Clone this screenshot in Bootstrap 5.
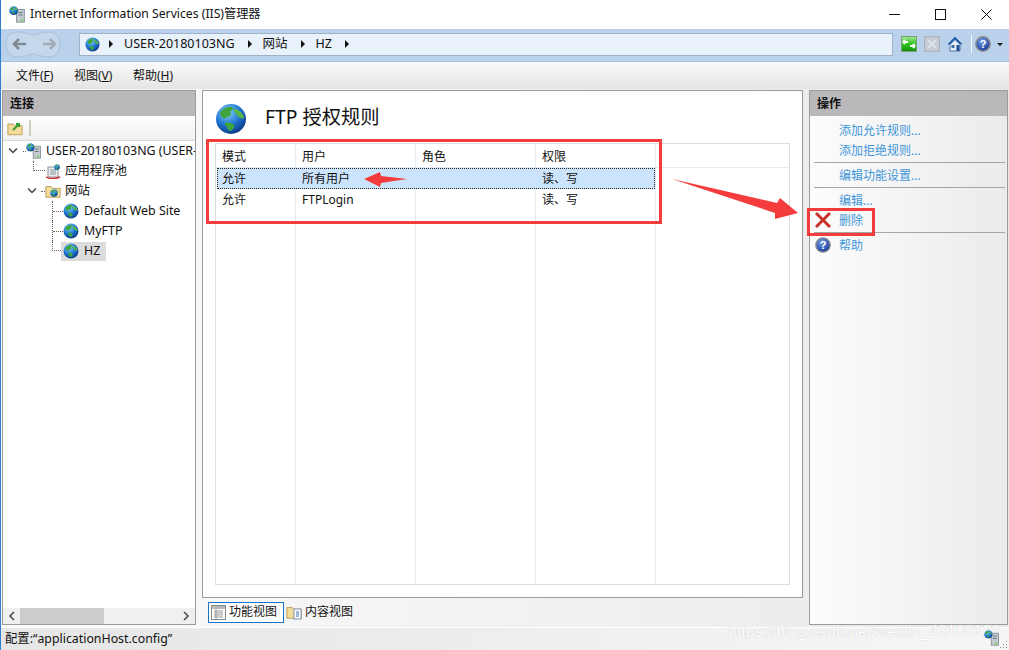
<!DOCTYPE html>
<html lang="zh-CN">
<head>
    <meta charset="UTF-8">
    <meta name="viewport" content="width=device-width">
    <link href="https://cdn.jsdelivr.net/npm/bootstrap@5.3.3/dist/css/bootstrap.min.css" rel="stylesheet">
    <title>IIS</title>
    <style>
        html, body { height: 100%; overflow: hidden; }
        body { font-family: "Noto Sans", "Noto Sans CJK SC", sans-serif; font-size: 12px; color: #111; background: #fff; line-height: 1; }
        .app-win { height: 650px; border-left: 2px solid #2f80d0; position: relative; margin-left: -1px; }
        .title-bar { height: 29px; padding-left: 8px; padding-bottom: 1px; font-size: 12.2px; }
        .win-btn { width: 46px; height: 27px; }
        .addr-bar { height: 33px; background: #b9d1ea; border-bottom: 1px solid #a9c2de; padding: 2px 3px 4px 4px; }
        .addr-box { width: 814px; flex: none; height: 23px; margin-left: 18px; background: #e9f1fa; border: 1px solid #9fb2c8; padding-left: 5px; font-size: 12.5px; }
        .crumb-sep { width: 0; height: 0; border-left: 4px solid #111; border-top: 4px solid transparent; border-bottom: 4px solid transparent; margin: 0 11px 0 13px; }
        .addr-globe { margin-right: -4px; }
        .addr-tools { margin-left: 8px; }
        .tool-gap { margin-left: 7px; }
        .tool-sep { width: 1px; height: 18px; background: #f4f8fc; margin: 0 3px 0 8px; }
        .drop-caret { width: 0; height: 0; border-top: 3px solid #111; border-left: 3px solid transparent; border-right: 3px solid transparent; margin-left: 6px; }
        .menu-strip { height: 27px; background: linear-gradient(#fafafa, #e4e4e4); padding-left: 15px; gap: 20.5px; }
        .work-area { height: 538px; background: linear-gradient(90deg, #fbfbfb, #e9e9e9); padding-top: 1px; padding-left: 1px; gap: 6px; }
        .side-left { width: 194px; height: 535px; border: 1px solid #9b9b9b; background: #fff; }
        .side-head { height: 25px; background: #bab8ba; font-weight: 700; padding-left: 7px; font-size: 12px; flex: none; }
        .tool-strip { height: 25px; background: linear-gradient(#fff, #f0f0f0); border-bottom: 1px solid #d8d8d8; padding-left: 4px; flex: none; }
        .tool-div { width: 2px; height: 16px; background: #cfcfc0; margin-left: 6px; }
        .tree-list { min-height: 0; overflow: hidden; }
        .tree-row { height: 20px; white-space: nowrap; font-size: 12.4px; }
        .tree-row svg { flex: none; }
        .row-root { padding-left: 5px; }
        .row-pool { padding-left: 30px; }
        .row-sites { padding-left: 24px; }
        .row-leaf { padding-left: 49px; }
        .tree-caret { margin-right: 4px; }
        .row-sites .tree-caret { margin-right: 3px; }
        .dot-short { width: 3px; border-top: 1px dotted #666; flex: none; }
        .dot-mid { width: 4px; border-top: 1px dotted #666; flex: none; }
        .dot-line { width: 10px; border-top: 1px dotted #666; }
        .tree-tee { height: 20px; border-left: 1px dotted #666; flex: none; }
        .tree-end { width: 11px; height: 10px; border-left: 1px dotted #666; border-bottom: 1px dotted #666; align-self: flex-start; flex: none; }
        .pool-end { width: 12px; }
        .tree-hit { background: #dcdcdc; padding: 0 6px 0 2px; height: 19px; margin-left: -2px; }
        .leaf-ico { margin-right: 5px; }
        .scroll-strip { height: 16px; background: #f0f0f0; padding: 0 5px; flex: none; }
        .scroll-thumb { width: 84px; height: 16px; background: #cdcdcd; margin-left: 4px; }
        .mid-col { width: 601px; }
        .mid-panel { height: 508px; border: 1px solid #9b9b9b; background: #fff; padding: 12px; }
        .page-head { height: 40px; font-size: 19.3px; }
        .page-title { margin-left: 18px; margin-top: 4px; }
        .rule-box { border: 1px solid #dedede; height: 442px; position: relative; }
        .rule-cols { position: absolute; inset: 0; pointer-events: none; }
        .rule-cols span { position: absolute; top: 0; bottom: 0; width: 1px; background: #e3ebf4; }
        .col-a { left: 79px; } .col-b { left: 199px; } .col-c { left: 319px; } .col-d { left: 439px; }
        .rule-line { height: 21px; display: grid; grid-template-columns: 80px 120px 120px 120px 1fr; position: relative; }
        .rule-line > div { padding-left: 6px; align-self: center; }
        .rule-head { height: 24px; border-bottom: 1px solid #e3ebf4; }
        .rule-head > div { padding-top: 2px; }
        .rule-sel { background: #cce4fb; outline: 1px dotted #222; outline-offset: -1px; margin-left: 1px; margin-right: 134px; grid-template-columns: 79px 120px 120px 120px 1fr; }
        .rule-sel > div:first-child { padding-left: 5px; }
        .view-tabs { height: 27px; padding-top: 4px; padding-left: 6px; gap: 1px; }
        .view-tab { height: 21px; padding: 0 6px 1px 2px; gap: 3px; }
        .view-plain { padding-left: 1px; }
        .view-on { border: 1px solid #1873c8; background: #fff; }
        .side-right { width: 199px; height: 535px; border: 1px solid #9b9b9b; background: linear-gradient(90deg, #fcfcfc, #ebebeb); }
        .act-list { padding-top: 5px; }
        .act-row { height: 20px; padding-left: 29px; color: #3f96d8; position: relative; }
        .act-rule { height: 1px; background: #a5a5a5; margin: 1px 2px 3px 4px; }
        .act-icon { position: absolute; left: 5px; top: 1px; }
        .status-bar { height: 23px; background: linear-gradient(90deg, #e6e6e6, #f6f6f6); padding-left: 4px; border-top: 1px solid #fff; font-size: 12.35px; position: relative; }
        .mark-box { position: absolute; border: 3px solid #f43c3c; pointer-events: none; }
        .mark-rules { left: 206px; top: 139px; width: 456px; height: 85px; }
        .mark-del { left: 807px; top: 208px; width: 68px; height: 28px; }
        .mark-layer { position: absolute; left: 0; top: 0; pointer-events: none; }
        .wm-text { position: absolute; left: 727px; top: -4px; white-space: nowrap; color: #fff; font-family: "Liberation Sans", sans-serif; font-size: 16px; text-shadow: 0 0 1px #b5b5b5; }
        .status-ico { position: absolute; right: 9px; top: 2px; }
        .grip-mark { position: absolute; right: 1px; bottom: 2px; }
    </style>
</head>
<body>
<svg width="0" height="0" class="position-absolute">
    <defs>
        <radialGradient id="seaFill" cx="38%" cy="28%" r="75%">
            <stop offset="0" stop-color="#8fd4fa"/><stop offset=".55" stop-color="#1f78d2"/><stop offset="1" stop-color="#0b3a88"/>
        </radialGradient>
        <linearGradient id="okFill" x1="0" y1="0" x2="0" y2="1">
            <stop offset="0" stop-color="#a8e89a"/><stop offset=".5" stop-color="#2fc41c"/><stop offset="1" stop-color="#0f8f0a"/>
        </linearGradient>
        <radialGradient id="helpFill" cx="40%" cy="30%" r="70%">
            <stop offset="0" stop-color="#6f9be6"/><stop offset="1" stop-color="#1b3f9c"/>
        </radialGradient>
        <symbol id="globeIco" viewBox="0 0 32 32">
            <circle cx="16" cy="16" r="15" fill="url(#seaFill)"/>
            <path d="M5 10c3-5 8-7 12-6 2 1 1 3-1 4-1 1 1 3-1 5-2 1-3 0-4 2-1 1-3 0-4-1-1-1-2-2-2-4z" fill="#3fa63c"/>
            <path d="M19 6c4 0 8 3 10 8 0 2-2 2-3 1-2-1-3-1-4-3-1-2-4-3-3-6z" fill="#56b545"/>
            <path d="M10 20c3-1 7 0 9 2 1 2-1 5-4 6-2-1-3-3-3-4-1-2-3-2-2-4z" fill="#3fa63c"/>
        </symbol>
        <symbol id="serverIco" viewBox="0 0 20 20">
            <rect x="9" y="4" width="9" height="15" fill="#c4ccd2" stroke="#7c8890"/>
            <rect x="11" y="7" width="5" height="1" fill="#566"/><rect x="11" y="10" width="5" height="1" fill="#566"/>
            <rect x="14" y="16" width="2" height="2" fill="#5c3"/>
            <use href="#globeIco" x="0" y="0" width="11" height="11"/>
        </symbol>
        <symbol id="folderIco" viewBox="0 0 18 16">
            <path d="M1 3h6l2 2h8v10H1z" fill="#f3dc9a" stroke="#b59a55"/>
        </symbol>
    </defs>
</svg>
<div class="app-win d-flex flex-column">
    <div class="title-bar d-flex align-items-center">
        <svg width="17" height="17" class="me-1"><use href="#serverIco"/></svg>
        <span class="flex-grow-1">Internet Information Services (IIS)管理器</span>
        <div class="win-btn d-flex align-items-center justify-content-center"><svg width="11" height="11"><path d="M0 5.500h11" stroke="#111"/></svg></div>
        <div class="win-btn d-flex align-items-center justify-content-center"><svg width="11" height="11"><rect x=".5" y=".5" width="10" height="10" fill="none" stroke="#111"/></svg></div>
        <div class="win-btn d-flex align-items-center justify-content-center"><svg width="11" height="11"><path d="M.5.5l10 10M10.500.5l-10 10" stroke="#111"/></svg></div>
    </div>
    <div class="addr-bar d-flex align-items-center">
        <svg width="56" height="27" class="flex-shrink-0">
            <path d="M12 1c9 0 12 3 16 3s8-3 16-3c7 0 11 6 11 12s-4 13-11 13c-8 0-12-3-16-3s-7 3-16 3C5 26 1 19 1 13S5 1 12 1z" fill="#c5d7ea" stroke="#a9c0d9"/>
            <path d="M21 13H9M14 8l-5 5 5 5" fill="none" stroke="#7f8a94" stroke-width="2.500"/>
            <path d="M38 13h12M45 8l5 5-5 5" fill="none" stroke="#a2adb7" stroke-width="2.500"/>
        </svg>
        <div class="addr-box d-flex align-items-center">
            <svg width="15" height="15" class="addr-globe"><use href="#globeIco"/></svg>
            <span class="crumb-sep"></span><span>USER-20180103NG</span>
            <span class="crumb-sep"></span><span>网站</span>
            <span class="crumb-sep"></span><span>HZ</span>
            <span class="crumb-sep"></span>
        </div>
        <div class="addr-tools d-flex align-items-center">
            <svg width="16" height="16"><rect x=".5" y=".5" width="15" height="15" fill="url(#okFill)" stroke="#7aa07a"/><path d="M2 6h5M2 6l2-2M2 6l2 2M14 10H9M14 10l-2-2M14 10l-2 2" stroke="#fff" stroke-width="1.800" fill="none"/></svg>
            <svg width="16" height="16" class="tool-gap"><rect x=".5" y=".5" width="15" height="15" fill="#c3ccd6" stroke="#aab4be"/><path d="M4 4l8 8M12 4l-8 8" stroke="#dde3e9" stroke-width="2"/></svg>
            <svg width="16" height="16" class="tool-gap"><path d="M8 1L1 8h2v7h10V8h2z" fill="#e8eef4" stroke="#4c78a8"/><path d="M8 1L1 8h3l4-4 4 4h3z" fill="#2d5fb0"/><rect x="9.500" y="9" width="3" height="6" fill="#1d4f9a"/><rect x="4.500" y="9" width="3" height="3" fill="#3d6fb0"/></svg>
            <span class="tool-sep"></span>
            <svg width="16" height="16"><circle cx="8" cy="8" r="7.200" fill="url(#helpFill)" stroke="#8c8c8c" stroke-width="1.500"/><text x="8" y="12" text-anchor="middle" font-size="11" font-weight="700" fill="#fff" font-family="Liberation Sans">?</text></svg>
            <span class="drop-caret"></span>
        </div>
    </div>
    <div class="menu-strip d-flex align-items-center">
        <span>文件(<u>F</u>)</span><span>视图(<u>V</u>)</span><span>帮助(<u>H</u>)</span>
    </div>
    <div class="work-area d-flex align-items-start">
        <div class="side-left d-flex flex-column">
            <div class="side-head d-flex align-items-center">连接</div>
            <div class="tool-strip d-flex align-items-center">
                <svg width="16" height="15"><use href="#folderIco"/><path d="M6 9l6-6M9 3h3v3" stroke="#3aa035" stroke-width="2" fill="none"/></svg>
                <span class="tool-div"></span>
            </div>
            <div class="tree-list flex-grow-1">
                <div class="tree-row row-root d-flex align-items-center">
                    <svg width="11" height="8" class="tree-caret"><path d="M1 1.500l4 4 4-4" fill="none" stroke="#444" stroke-width="1.500"/></svg>
                    <span class="dot-short"></span>
                    <svg width="16" height="16"><use href="#serverIco"/></svg>
                    <span class="ms-1">USER-20180103NG (USER-20180103NG\admin)</span>
                </div>
                <div class="tree-row row-pool d-flex align-items-center">
                    <span class="tree-end pool-end"></span>
                    <svg width="16" height="16"><rect x="3" y="4" width="10" height="10" fill="#eceff2" stroke="#89929b"/><path d="M5 7h6M5 9h6M5 11h6" stroke="#89929b"/><path d="M1 14c3 2 10 2 14 0" stroke="#c33" stroke-width="1.500" fill="none"/><use href="#globeIco" x="9" y="1" width="6" height="6"/></svg>
                    <span class="ms-1">应用程序池</span>
                </div>
                <div class="tree-row row-sites d-flex align-items-center">
                    <svg width="11" height="8" class="tree-caret"><path d="M1 1.500l4 4 4-4" fill="none" stroke="#444" stroke-width="1.500"/></svg>
                    <span class="dot-mid"></span>
                    <svg width="16" height="16"><use href="#folderIco"/><use href="#globeIco" x="5" y="6" width="8" height="8"/></svg>
                    <span class="ms-1">网站</span>
                </div>
                <div class="tree-row row-leaf d-flex align-items-center">
                    <span class="tree-tee d-flex align-items-center"><span class="dot-line"></span></span>
                    <svg width="16" height="16" class="leaf-ico"><use href="#globeIco"/></svg>
                    <span>Default Web Site</span>
                </div>
                <div class="tree-row row-leaf d-flex align-items-center">
                    <span class="tree-tee d-flex align-items-center"><span class="dot-line"></span></span>
                    <svg width="16" height="16" class="leaf-ico"><use href="#globeIco"/></svg>
                    <span>MyFTP</span>
                </div>
                <div class="tree-row row-leaf d-flex align-items-center">
                    <span class="tree-end"></span>
                    <span class="tree-hit d-inline-flex align-items-center"><svg width="16" height="16" class="leaf-ico"><use href="#globeIco"/></svg>HZ</span>
                </div>
            </div>
            <div class="scroll-strip d-flex align-items-center">
                <svg width="8" height="10"><path d="M6 1L2 5l4 4" fill="none" stroke="#444" stroke-width="1.500"/></svg>
                <span class="scroll-thumb flex-shrink-0"></span>
                <span class="flex-grow-1"></span>
                <svg width="8" height="10"><path d="M2 1l4 4-4 4" fill="none" stroke="#444" stroke-width="1.500"/></svg>
            </div>
        </div>
        <div class="mid-col d-flex flex-column">
            <div class="mid-panel d-flex flex-column">
                <div class="page-head d-flex align-items-start">
                    <svg width="32" height="32"><use href="#globeIco"/></svg>
                    <span class="page-title">FTP 授权规则</span>
                </div>
                <div class="rule-box">
                    <div class="rule-cols"><span class="col-a"></span><span class="col-b"></span><span class="col-c"></span><span class="col-d"></span></div>
                    <div class="rule-line rule-head"><div>模式</div><div>用户</div><div>角色</div><div>权限</div><div></div></div>
                    <div class="rule-line rule-sel"><div>允许</div><div>所有用户</div><div></div><div>读、写</div><div></div></div>
                    <div class="rule-line"><div>允许</div><div>FTPLogin</div><div></div><div>读、写</div><div></div></div>
                </div>
            </div>
            <div class="view-tabs d-flex">
                <div class="view-tab view-on d-flex align-items-center">
                    <svg width="15" height="15"><rect x=".5" y=".5" width="14" height="14" fill="#fff" stroke="#8a8a8a"/><rect x="1" y="1" width="13" height="3" fill="#b9b9b9"/><path d="M5 4v10M3 6h9M3 8h9M3 10h9M3 12h9" stroke="#999"/></svg>
                    <span>功能视图</span>
                </div>
                <div class="view-tab view-plain d-flex align-items-center">
                    <svg width="16" height="16"><use href="#folderIco"/><rect x="8" y="5" width="7" height="10" fill="#fff" stroke="#7a8fa8"/><path d="M10 8h3M10 10h3M10 12h3" stroke="#3b6fb0"/></svg>
                    <span>内容视图</span>
                </div>
            </div>
        </div>
        <div class="side-right">
            <div class="side-head d-flex align-items-center">操作</div>
            <div class="act-list">
                <div class="act-row d-flex align-items-center">添加允许规则...</div>
                <div class="act-row d-flex align-items-center">添加拒绝规则...</div>
                <div class="act-rule"></div>
                <div class="act-row d-flex align-items-center">编辑功能设置...</div>
                <div class="act-rule"></div>
                <div class="act-row d-flex align-items-center">编辑...</div>
                <div class="act-row d-flex align-items-center">
                    <svg class="act-icon" width="16" height="16"><path d="M1 1l14 14M15 1L1 15" stroke="#c8322b" stroke-width="3"/></svg>删除
                </div>
                <div class="act-rule"></div>
                <div class="act-row d-flex align-items-center">
                    <svg class="act-icon" width="16" height="16"><circle cx="8" cy="8" r="7.200" fill="url(#helpFill)" stroke="#8c8c8c" stroke-width="1.300"/><text x="8" y="12" text-anchor="middle" font-size="11" font-weight="700" fill="#fff" font-family="Liberation Sans">?</text></svg>帮助
                </div>
            </div>
        </div>
    </div>
    <div class="status-bar d-flex align-items-center">
        <span>配置:“applicationHost.config”</span>
        <span class="wm-text">https://blog.csdn.net/weixin_43108122</span>
        <svg width="16" height="16" class="status-ico"><use href="#serverIco"/></svg>
        <svg class="grip-mark" width="8" height="8"><path d="M6 1h1v1H6zM3 4h1v1H3zM6 4h1v1H6zM0 7h1v1H0zM3 7h1v1H3zM6 7h1v1H6z" fill="#8a8a8a"/></svg>
    </div>
</div>
<div class="mark-box mark-rules"></div>
<div class="mark-box mark-del"></div>
<svg class="mark-layer" width="1009" height="650">
    <path d="M672 179L777 203l3-5 18 15-23 6v-6z" fill="#f43c3c"/>
    <path d="M364 179l16-7 1 4 26 3-26 4-1 4z" fill="#f43c3c"/>
</svg>
<script src="https://cdn.jsdelivr.net/npm/bootstrap@5.3.3/dist/js/bootstrap.bundle.min.js"></script>
</body>
</html>
